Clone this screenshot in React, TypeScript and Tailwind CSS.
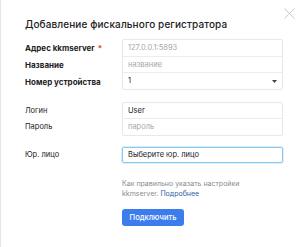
import React from "react";

export default function App() {
  const font = { fontFamily: "Inter, 'Noto Sans', sans-serif" };
  return (
    <div className="w-[300px] h-[247px] bg-white border-l border-[#e6e6e6] relative text-[#222]" style={font}>
      <button className="absolute left-[283px] top-[8px] w-[11px] h-[11px] text-[#c5c9cf]">
        <svg viewBox="0 0 11 11" width="11" height="11" fill="none" stroke="currentColor" strokeWidth="1">
          <path d="M0.5 0.5L10.5 10.5M10.5 0.5L0.5 10.5" />
        </svg>
      </button>
      <div className="pl-[24px] pt-[17px]">
        <div className="text-[10px] font-medium leading-[14px] tracking-[0.1px]">Добавление фискального регистратора</div>
        <div className="mt-[8px] flex">
          <div className="w-[97px] flex flex-col text-[8px] font-bold">
            <div className="h-[17px] flex items-center">Адрес kkmserver <span className="text-[#e53935] ml-[3px]">*</span></div>
            <div className="h-[17px] flex items-center">Название</div>
            <div className="h-[17px] flex items-center">Номер устройства</div>
          </div>
          <div className="w-[161px] border border-[#e8e8e8] rounded-[2px] flex flex-col text-[7.5px]">
            <div className="h-[17px] flex items-center px-[5px] text-[#a8a8a8] border-b border-[#ececec]">127.0.0.1:5893</div>
            <div className="h-[16px] flex items-center px-[5px] text-[#a8a8a8] border-b border-[#ececec]">название</div>
            <div className="h-[16px] flex items-center px-[5px] justify-between">
              <span>1</span>
              <svg width="5" height="3" viewBox="0 0 5 3"><path d="M0 0h5L2.5 3z" fill="#444" /></svg>
            </div>
          </div>
        </div>
        <div className="mt-[12px] flex">
          <div className="w-[97px] flex flex-col text-[7.5px]">
            <div className="h-[17px] flex items-center">Логин</div>
            <div className="h-[16px] flex items-center">Пароль</div>
          </div>
          <div className="w-[161px] border border-[#e8e8e8] rounded-[2px] flex flex-col text-[7.5px]">
            <div className="h-[16px] flex items-center px-[5px] border-b border-[#ececec]">User</div>
            <div className="h-[16px] flex items-center px-[5px] text-[#a8a8a8]">пароль</div>
          </div>
        </div>
        <div className="mt-[11px] flex">
          <div className="w-[97px] h-[16px] flex items-center text-[7.5px]">Юр. лицо</div>
          <div className="w-[161px] h-[16px] border border-[#8cc6ee] rounded-[2px] shadow-[0_0_0_1px_#d9eefb] flex items-center px-[5px] text-[7.5px]">
            Выберите юр. лицо
          </div>
        </div>
        <div className="ml-[97px] mt-[16px] text-[7px] leading-[10px] text-[#8a8a8a]">
          Как правильно указать настройки<br />kkmserver. <span className="text-[#2d5ea6]">Подробнее</span>
        </div>
        <button className="ml-[97px] mt-[10px] w-[62px] h-[17px] rounded-[3px] bg-[#3d7cec] text-white text-[7.5px] font-medium flex items-center justify-center">
          Подключить
        </button>
      </div>
    </div>
  );
}
